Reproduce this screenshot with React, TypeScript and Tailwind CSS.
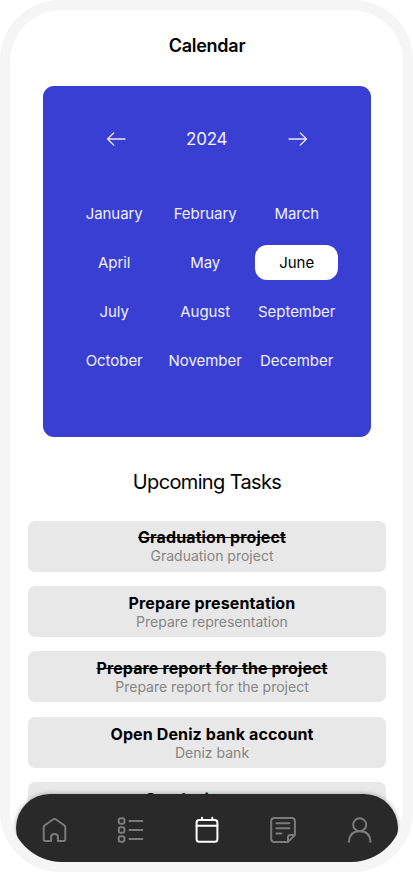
import React from "react";

const months = [
  "January", "February", "March",
  "April", "May", "June",
  "July", "August", "September",
  "October", "November", "December",
];

const tasks = [
  { title: "Graduation project", note: "Graduation project", done: true },
  { title: "Prepare presentation", note: "Prepare representation", done: false },
  { title: "Prepare report for the project", note: "Prepare report for the project", done: true },
  { title: "Open Deniz bank account", note: "Deniz bank", done: false },
  { title: "Send minor error", note: "Send minor error", done: false },
];

function Arrow({ right = false }: { right?: boolean }) {
  return (
    <svg width="20" height="16" viewBox="0 0 20 16" fill="none" stroke="#e8e8fc" strokeWidth="1.3" strokeLinecap="round" strokeLinejoin="round">
      {right ? <path d="M1 8h17.5M12.3 2l6.2 6-6.2 6" /> : <path d="M19 8H1.5M7.7 2L1.5 8l6.2 6" />}
    </svg>
  );
}

function NavIcon({ active = false, children }: { active?: boolean; children: React.ReactNode }) {
  return (
    <button className={active ? "text-white" : "text-[#7b7b7b]"}>
      <svg className="block" width="28" height="28" viewBox="0 0 28 28" fill="none" stroke="currentColor" strokeWidth="2" strokeLinecap="round" strokeLinejoin="round">
        {children}
      </svg>
    </button>
  );
}

export default function App() {
  return (
    <main className="h-[872px] w-[413px] overflow-hidden rounded-[60px] bg-[#f5f5f5] p-[10px] font-['Inter','Liberation_Sans',sans-serif]">
      <div className="relative h-[852px] w-[393px] overflow-hidden rounded-[52px] bg-white">
        <h1 className="pt-[24px] pl-px text-center text-[18px] leading-6 font-semibold tracking-[-0.25px] text-black">Calendar</h1>
        <section className="mt-[28.4px] ml-[33.2px] h-[351px] w-[327.5px] rounded-[11px] bg-[#393fd2] pt-[38.2px] text-[#f0f0ff]">
          <div className="ml-[25px] grid grid-cols-[91px_91px_92px] items-center justify-items-center text-[17px] leading-[28px]">
            <div className="pl-1"><Arrow /></div>
            <span className="pl-[4px] tracking-[-0.2px]">2024</span>
            <div className="pl-1"><Arrow right /></div>
          </div>
          <div className="mt-[43.2px] ml-[25px] grid grid-cols-[91px_91px_92px] gap-y-[14px] text-center text-[15px] leading-[35px] tracking-[-0.05px]">
            {months.map((month) => (
              <div key={month} className={month === "June" ? "ml-[5px] w-[83px] rounded-[12px] bg-white text-black" : "pl-[1px]"}>{month}</div>
            ))}
          </div>
        </section>
        <h2 className="mt-[30.6px] ml-px text-center text-[20px] leading-[28px] tracking-[-0.64px] text-black">Upcoming Tasks</h2>
        <section className="mt-[24.6px] ml-[18px] flex w-[358px] flex-col gap-[14.4px]">
          {tasks.map((task) => (
            <article key={task.title} className="h-[51px] rounded-[7px] bg-[#e8e8e8] pt-[7.9px] pl-[10px] text-center">
              <h3 className={`text-[16px] leading-[19px] font-bold tracking-[0.12px] text-black ${task.done ? "line-through decoration-[1.3px]" : ""}`}>{task.title}</h3>
              <p className="text-[14px] leading-[18px] text-[#858585]">{task.note}</p>
            </article>
          ))}
        </section>
        <nav className="absolute top-[783.5px] left-[6px] flex h-[68px] w-[382px] items-center justify-between rounded-[36px] bg-[#292929] px-[24px] pt-[5px] shadow-[0_0_5px_rgba(0,0,0,0.35)]">
          <NavIcon><path d="M3.7 11.5Q3.7 10 4.8 9.2L12.6 3.7Q14.4 2.4 16.4 3.7L24.2 9.2Q25.3 10 25.3 11.5V23.3Q25.3 24.9 23.7 24.9H17.9V20.5Q17.9 18 14.5 18T11.1 20.5V24.9H5.3Q3.7 24.9 3.7 23.3Z" /></NavIcon>
          <NavIcon><path d="M12.4 5h13M12.4 14h13M12.4 23h13" /><rect x="1.8" y="2.2" width="5.6" height="5.6" rx="1.7" /><rect x="1.8" y="11.2" width="5.6" height="5.6" rx="1.7" /><rect x="1.8" y="20.2" width="5.6" height="5.6" rx="1.7" /></NavIcon>
          <NavIcon active><rect x="3.6" y="4" width="20.8" height="21.8" rx="2.6" /><path d="M3.6 9.8h20.8M9 1.8v2M19.3 1.8v2" /></NavIcon>
          <NavIcon><path d="M18 25.9H4.2Q1.2 25.9 1.2 22.9V5Q1.2 2 4.2 2H21.9Q24.9 2 24.9 5V19L18 25.9V21.4Q18 19 20.5 19H24.9M6.4 7.3h13M6.4 12.3h13M6.4 17.5h5" /></NavIcon>
          <NavIcon><circle cx="13.7" cy="8.7" r="6.5" /><path d="M3 25.8Q3.4 15.3 13.7 15.3T24.4 25.8" /></NavIcon>
        </nav>
      </div>
    </main>
  );
}
